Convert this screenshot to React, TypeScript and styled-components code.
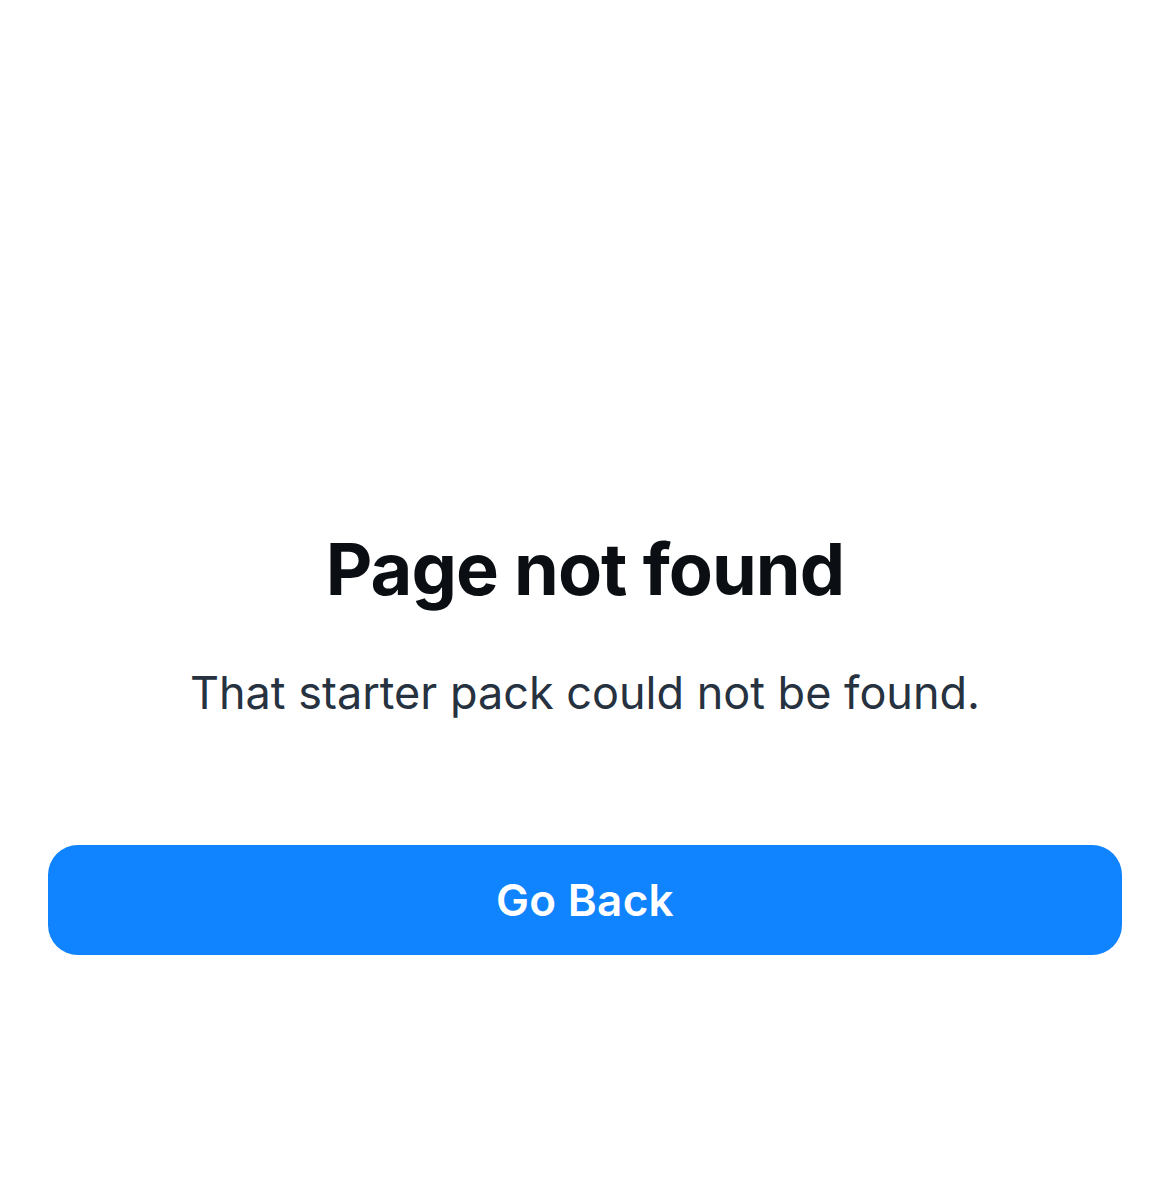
import React from "react";
import styled, { createGlobalStyle } from "styled-components";

const GlobalStyle = createGlobalStyle`
  html, body {
    margin: 0;
    padding: 0;
    background: #ffffff;
  }
  body {
    font-family: Inter, "Noto Sans", "Liberation Sans", sans-serif;
    -webkit-font-smoothing: antialiased;
  }
`;

const Page = styled.main`
  box-sizing: border-box;
  width: 100%;
  min-height: 1203px;
  padding: 526px 48px 0;
  display: flex;
  flex-direction: column;
  align-items: stretch;
`;

const Title = styled.h1`
  margin: 0;
  text-align: center;
  font-size: 72px;
  line-height: 86px;
  font-weight: 700;
  letter-spacing: -0.95px;
  color: #0b0f14;
`;

const Message = styled.p`
  margin: 52px 0 0;
  text-align: center;
  font-size: 45px;
  line-height: 58px;
  font-weight: 400;
  color: #26323f;
`;

const BackButton = styled.button`
  margin-top: 123px;
  height: 110px;
  border: none;
  border-radius: 30px;
  background: #1083fe;
  color: #ffffff;
  font-family: inherit;
  font-size: 44px;
  font-weight: 600;
  letter-spacing: 0.3px;
  display: flex;
  align-items: center;
  justify-content: center;
  cursor: pointer;
`;

export default function App() {
  return (
    <>
      <GlobalStyle />
      <Page>
        <Title>Page not found</Title>
        <Message>That starter pack could not be found.</Message>
        <BackButton type="button">Go Back</BackButton>
      </Page>
    </>
  );
}
